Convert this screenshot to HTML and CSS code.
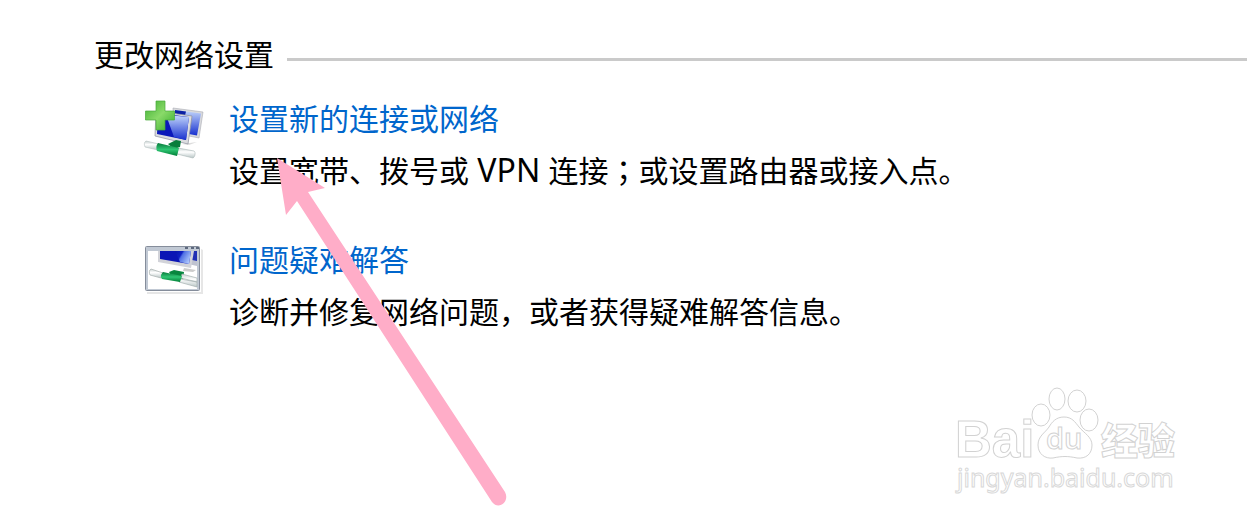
FILE: index.html
```html
<!DOCTYPE html>
<html lang="zh-CN">
<head>
    <meta charset="UTF-8">
    <meta name="viewport" content="width=device-width, initial-scale=1.0">
    <title>更改网络设置</title>
    <link rel="stylesheet" href="styles.css">
</head>
<body>
    <main class="settings">
        <div class="heading">
            <h1>更改网络设置</h1>
            <div class="line"></div>
        </div>
        <ul class="tasks">
            <li class="task">
                <svg class="icon" viewBox="8 8 62 62" aria-hidden="true">
                    <defs>
                        <linearGradient id="screen" x1="0" y1="0" x2="1" y2="0.5">
                            <stop offset="0" stop-color="#0715a8"/>
                            <stop offset="0.4" stop-color="#1020c4"/>
                            <stop offset="0.5" stop-color="#4f6fe4"/>
                            <stop offset="1" stop-color="#a9c3fa"/>
                        </linearGradient>
                        <linearGradient id="shine" x1="0" y1="0" x2="0" y2="1">
                            <stop offset="0" stop-color="#c5d8fc"/>
                            <stop offset="1" stop-color="#1730cf"/>
                        </linearGradient>
                        <linearGradient id="plus" x1="0" y1="0" x2="1" y2="1">
                            <stop offset="0" stop-color="#3fae32"/>
                            <stop offset="0.5" stop-color="#8ada69"/>
                            <stop offset="1" stop-color="#35ad2b"/>
                        </linearGradient>
                        <linearGradient id="plug" x1="0" y1="0" x2="0" y2="1">
                            <stop offset="0" stop-color="#087a3b"/>
                            <stop offset="0.5" stop-color="#2fc673"/>
                            <stop offset="1" stop-color="#007e36"/>
                        </linearGradient>
                        <linearGradient id="glass" x1="0" y1="0" x2="0" y2="1">
                            <stop offset="0" stop-color="#c9d2d2"/>
                            <stop offset="0.4" stop-color="#ffffff"/>
                            <stop offset="1" stop-color="#b9c6c6"/>
                        </linearGradient>
                    </defs>
                    <path d="M47 54l15-2-8 3z" fill="#dddddd"/>
                    <path d="M38 18l30 4-4 26-25-5z" fill="#d9dadd" stroke="#a9abb4" stroke-width="0.6"/>
                    <path d="M40 20l26 3.500-4 22-22-4z" fill="url(#shine)"/>
                    <path d="M40 20l11 1.500-1 4-10-2z" fill="#0c20a4"/>
                    <path d="M21 21l36 5-4 28-33-8z" fill="#dcdde0" stroke="#8d8f9e" stroke-width="0.7"/>
                    <path d="M23 23l31 4-3 23-29-6z" fill="#0b18ba"/>
                    <path d="M31 25l23 2-3 23-12-3z" fill="url(#shine)"/>
                    <path d="M21 11h9v10h9.500v9H30v10h-9V30H10.500v-9H21z" fill="url(#plus)" stroke="#48a93b" stroke-width="0.7"/>
                    <path d="M33 54l8-4 5 1-1 6-6 2z" fill="#087d3b"/>
                    <path d="M11 51l13 3-1 6-13-3c-1-2-1-5 1-6z" fill="url(#glass)" stroke="#b5c1c1" stroke-width="0.6"/>
                    <path d="M43 58l16 3c2 1 1 6-1 7l-16-4z" fill="url(#glass)" stroke="#a8b5b5" stroke-width="0.6"/>
                    <path d="M23 53l21 5-2 8-20-5c-1-2-1-6 1-8z" fill="url(#plug)"/>
                </svg>
                <div class="text">
                    <a href="#">设置新的连接或网络</a>
                    <p>设置宽带、拨号或<span class="latin"> VPN </span>连接<span class="mark" lang="ja">；</span>或设置路由器或接入点。</p>
                </div>
            </li>
            <li class="task">
                <svg class="icon" viewBox="8 4 62 62" aria-hidden="true">
                    <path d="M12 57h54V14l2 1v44H12z" fill="#e6e6e6"/>
                    <rect x="10.500" y="11.500" width="54" height="44" rx="1" fill="#ffffff" stroke="#858d9b"/>
                    <path d="M11 12h53v43h-2V16H13v38h49v1H11z" fill="#c1c9d4"/>
                    <path d="M50 13h3M56 13h3M61 13h3" stroke="#5d697e" stroke-width="2"/>
                    <path d="M52 16h10v15l-9-2z" fill="#bfc3d0"/>
                    <path d="M57 16h5v10l-5-1z" fill="#202fb4"/>
                    <path d="M23 16h36l-3 17-33-6z" fill="#d2d3d9"/>
                    <path d="M25 16h31l-2 13-29-5z" fill="#0b15b5"/>
                    <path d="M40 16h16l-2 13-9-2z" fill="url(#screen)"/>
                    <path d="M49 33l12 2-3 2-10-1z" fill="#cccccc"/>
                    <path d="M34 37l5-2 10 2-1 7-11-2z" fill="#07863e"/>
                    <path d="M16 34l12 4-2 5-11-3c-1-2-1-5 1-6z" fill="url(#glass)" stroke="#a6afae" stroke-width="0.7"/>
                    <path d="M47 39l15 4v4l-16-4zM45 44l17 3v5l-18-5z" fill="url(#glass)" stroke="#a6b1b1" stroke-width="0.7"/>
                    <path d="M28 37l19 4-2 6-18-3c-2-2-1-5 1-7z" fill="url(#plug)"/>
                </svg>
                <div class="text">
                    <a href="#">问题疑难解答</a>
                    <p>诊断并修复网络问题，或者获得疑难解答信息。</p>
                </div>
            </li>
        </ul>
    </main>

    <svg class="arrow" viewBox="0 0 232 352" aria-hidden="true">
        <path d="M2 3l48 30-17 4 197 300c5 9-6 19-13 10L22 46 11 60z" fill="#ffadc8"/>
    </svg>

    <svg class="watermark" viewBox="0 0 230 116" role="img" aria-label="Baidu 经验">
        <g class="outline">
            <text class="brand" x="3" y="70">Bai</text>
            <ellipse cx="89" cy="28" rx="9" ry="11"/>
            <ellipse cx="105" cy="12" rx="8" ry="11"/>
            <ellipse cx="125" cy="14" rx="9" ry="11"/>
            <ellipse cx="137" cy="33" rx="9" ry="11"/>
            <path d="M112 30c-8 0-12 5-15 10-4 6-11 9-11 18 0 9 7 14 15 13 9-2 15-2 24 0 9 1 15-4 15-13 0-8-8-12-13-18-4-5-7-10-15-10z"/>
            <text class="du" x="94" y="62">du</text>
            <text class="product" x="149" y="68">经验</text>
        </g>
        <text class="site" x="5" y="100">jingyan.baidu.com</text>
    </svg>
</body>
</html>
```
FILE: styles.css
```css
* {
    box-sizing: border-box;
}
body {
    position: relative;
    min-height: 100vh;
    margin: 0;
    overflow-x: hidden;
    background: #fff;
    color: #000;
    font-family: "Noto Sans", "Noto Sans CJK SC", sans-serif;
    font-size: 30px;
    line-height: 52px;
}
.settings {
    padding: 29px 0 0 94px;
}
.heading {
    display: flex;
    align-items: center;
    gap: 13px;
}
h1 {
    margin: 0;
    font-size: 30px;
    font-weight: normal;
}
.line {
    flex: 1;
    height: 3px;
    margin-top: 8px;
    background: #cacaca;
}
.tasks {
    display: flex;
    flex-direction: column;
    gap: 37px;
    margin: 12px 0 0;
    padding: 0 0 0 49px;
    list-style: none;
}
.task {
    display: flex;
    align-items: flex-start;
    gap: 24px;
}
.icon {
    flex: none;
    width: 62px;
    height: 62px;
    margin-top: 5px;
}
.text a {
    display: block;
    color: #0066cc;
    text-decoration: none;
}
.text a:hover {
    text-decoration: underline;
}
.text p {
    margin: 0;
}
.latin {
    font-size: 32px;
    line-height: 1;
}
.mark {
    font-family: "Noto Sans CJK JP", sans-serif;
    line-height: 1;
}
.arrow {
    position: absolute;
    top: 155px;
    left: 275px;
    width: 232px;
    height: 352px;
    pointer-events: none;
}
.watermark {
    position: absolute;
    right: 65px;
    bottom: 18px;
    width: 230px;
    height: 116px;
    font-family: "Liberation Sans", "Noto Sans CJK SC", sans-serif;
    line-height: 1;
    pointer-events: none;
}
.outline {
    fill: #fff;
    stroke: #d2d2d2;
    stroke-width: 1px;
}
.brand {
    font-size: 51px;
    font-weight: bold;
}
.du {
    font-family: "Open Sans", sans-serif;
    font-size: 29px;
    font-weight: 600;
}
.product {
    font-size: 37px;
    font-weight: 900;
}
.site {
    fill: #fff;
    stroke: #d8d8d8;
    stroke-width: 1px;
    font-family: "Noto Sans", sans-serif;
    font-size: 25px;
}
```
